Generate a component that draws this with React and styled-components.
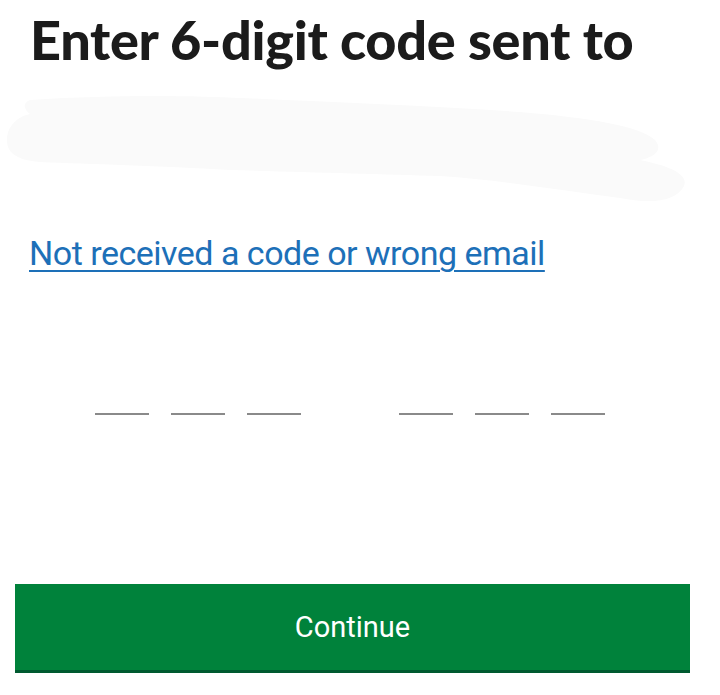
import styled, { createGlobalStyle } from "styled-components";

const GlobalStyle = createGlobalStyle`
  html, body {
    margin: 0;
    padding: 0;
    background: #ffffff;
  }
  body {
    font-family: "Roboto", "Liberation Sans", sans-serif;
  }
`;

const Page = styled.main`
  width: 720px;
  height: 695px;
  display: flex;
  flex-direction: column;
  overflow: hidden;
`;

const Heading = styled.h1`
  margin: 0;
  padding: 10px 0 0 30px;
  font-family: "Lato", "Liberation Sans", sans-serif;
  font-weight: 900;
  font-size: 54px;
  line-height: 60px;
  color: #1b1b1b;
  letter-spacing: -0.3px;
`;

const Redaction = styled.svg`
  display: block;
  width: 720px;
  height: 130px;
  margin-top: 22px;
`;

const LinkRow = styled.div`
  padding: 0 0 0 29px;
  margin-top: 9px;
`;

const HelpLink = styled.a`
  font-family: "Roboto", "Liberation Sans", sans-serif;
  font-size: 34px;
  line-height: 44px;
  color: #1d70b8;
  letter-spacing: -0.5px;
  text-decoration: underline;
  text-decoration-thickness: 2px;
  text-underline-offset: 5px;
`;

const CodeRow = styled.div`
  display: flex;
  justify-content: center;
  gap: 98px;
  padding-right: 20px;
  margin-top: 138px;
`;

const CodeGroup = styled.div`
  display: flex;
  gap: 22px;
`;

const Slot = styled.span`
  display: block;
  width: 54px;
  height: 2px;
  background: #8a8a8a;
`;

const ButtonRow = styled.div`
  padding: 0 30px 0 15px;
  margin-top: 169px;
`;

const ContinueButton = styled.button`
  display: block;
  width: 675px;
  height: 89px;
  border: 0;
  border-radius: 0;
  background: #00823b;
  box-shadow: inset 0 -3px 0 #005a30;
  color: #ffffff;
  font-family: "Roboto", "Liberation Sans", sans-serif;
  font-size: 29px;
  padding: 0 0 4px;
  cursor: pointer;
`;

const groups = [
  [0, 1, 2],
  [3, 4, 5],
];

export default function App() {
  return (
    <Page>
      <GlobalStyle />
      <Heading>Enter 6-digit code sent to</Heading>
      <Redaction viewBox="0 0 720 130" aria-hidden="true">
        <path
          d="M30 8 C120 2 200 4 240 6 C330 10 430 14 520 20 C590 26 640 34 655 48 C665 60 650 66 640 68 C660 72 690 80 684 94 C676 110 650 112 620 106 C560 98 500 88 440 84 C380 82 300 80 230 78 C160 74 90 72 40 70 C10 68 4 56 8 40 C12 30 20 24 30 22 C22 16 24 10 30 8 Z"
          fill="#fafafa"
        />
      </Redaction>
      <LinkRow>
        <HelpLink href="#">Not received a code or wrong email</HelpLink>
      </LinkRow>
      <CodeRow>
        {groups.map((g, i) => (
          <CodeGroup key={i}>
            {g.map((n) => (
              <Slot key={n} />
            ))}
          </CodeGroup>
        ))}
      </CodeRow>
      <ButtonRow>
        <ContinueButton>Continue</ContinueButton>
      </ButtonRow>
    </Page>
  );
}
